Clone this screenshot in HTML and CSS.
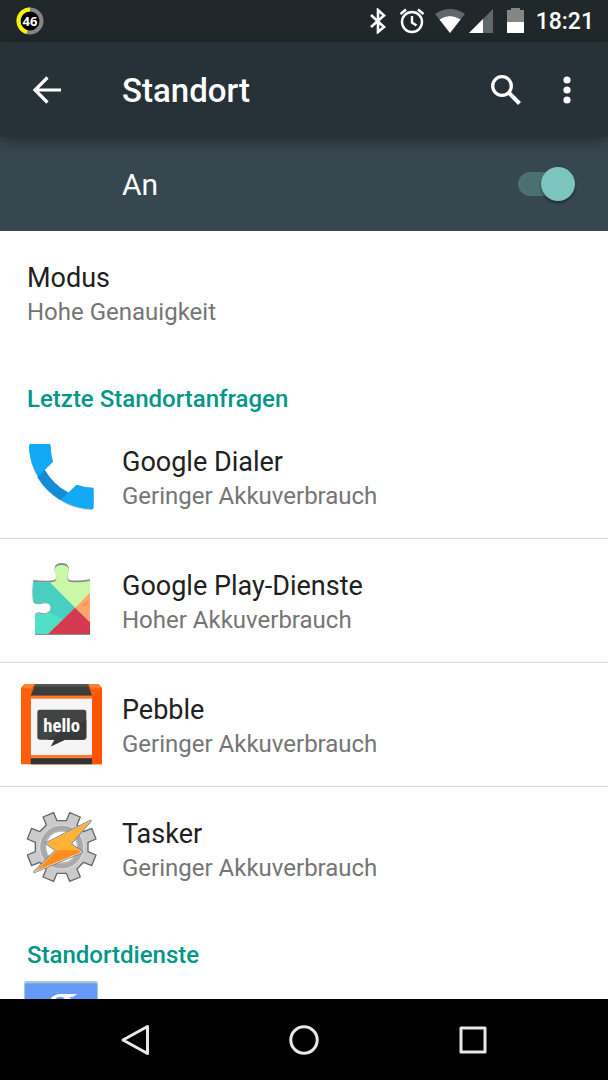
FILE: index.html
```html
<!DOCTYPE html>
<html lang="de">
<head>
    <meta charset="UTF-8">
    <meta name="viewport" content="width=device-width, initial-scale=1.0">
    <title>Standort</title>
    <link rel="stylesheet" href="styles.css">
</head>
<body>
    <div class="status-bar">
        <svg class="battery-ring" width="28" height="28" viewBox="0 0 28 28">
            <circle cx="14" cy="14" r="11.500" fill="#000" stroke="#858585" stroke-width="4"/>
            <path d="M14 2.500A11.500 11.500 0 0 0 11 25.100" fill="none" stroke="#f6f600" stroke-width="4"/>
            <text x="14" y="18.500" text-anchor="middle">46</text>
        </svg>
        <div class="status-icons">
            <!-- bluetooth -->
            <svg width="18" height="26" viewBox="0 0 18 26">
                <path d="M2 7L15 19L9 24V2L15 7.500L2 19" fill="none" stroke="#fff" stroke-width="2.600"/>
            </svg>
            <!-- alarm -->
            <svg class="alarm" width="26" height="26" viewBox="0 0 26 26">
                <circle cx="13" cy="14" r="10" fill="none" stroke="#fff" stroke-width="2.400"/>
                <path d="M13 8V14.500L17.500 17.500M1.500 6L7 1.500M24.500 6L19 1.500" fill="none" stroke="#fff" stroke-width="2.400"/>
            </svg>
            <!-- wifi -->
            <svg class="wifi" width="30" height="26" viewBox="0 0 30 26">
                <path d="M0 6Q15 -4 30 6L15 25Z" fill="#5f686c"/>
                <path d="M4.500 11.500Q15 4.500 25.500 11.500L15 25Z" fill="#fff"/>
            </svg>
            <!-- signal -->
            <svg class="signal" width="24" height="26" viewBox="0 0 24 26">
                <path d="M24 1V25H0Z" fill="#5f686c"/>
                <path d="M14 11V25H0Z" fill="#fff"/>
            </svg>
            <!-- battery -->
            <svg class="battery" width="17" height="26" viewBox="0 0 17 26">
                <path d="M0 2H4V0H13V2H17V14H0Z" fill="#858585"/>
                <path d="M0 14H17V25H0Z" fill="#fff"/>
            </svg>
            <span class="clock">18:21</span>
        </div>
    </div>

    <header class="app-bar">
        <button class="icon-btn" aria-label="Zurück">
            <svg width="28" height="28" viewBox="0 0 28 28">
                <path d="M28 14H3M14.500 1.500L2 14L14.500 26.500" fill="none" stroke="#fff" stroke-width="3.200"/>
            </svg>
        </button>
        <h1>Standort</h1>
        <button class="icon-btn" aria-label="Suchen">
            <svg width="30" height="30" viewBox="0 0 30 30">
                <circle cx="11" cy="11" r="9.300" fill="none" stroke="#fff" stroke-width="3.300"/>
                <path d="M17.500 17.500L28.500 28.500" stroke="#fff" stroke-width="4"/>
            </svg>
        </button>
        <button class="icon-btn" aria-label="Weitere Optionen">
            <svg width="8" height="28" viewBox="0 0 8 28">
                <g fill="#fff">
                    <circle cx="4" cy="4" r="3.600"/>
                    <circle cx="4" cy="14" r="3.600"/>
                    <circle cx="4" cy="24" r="3.600"/>
                </g>
            </svg>
        </button>
    </header>

    <div class="switch-bar">
        <label for="locationSwitch">An</label>
        <input type="checkbox" class="switch" id="locationSwitch" checked>
    </div>

    <main class="settings">
        <a class="row mode" href="#">
            <span class="text">
                <span class="title">Modus</span>
                <span class="summary">Hohe Genauigkeit</span>
            </span>
        </a>

        <h2>Letzte Standortanfragen</h2>
        <ul class="list">
            <li>
                <a class="row" href="#">
                    <svg class="app-icon" viewBox="33 18 243 243">
                        <path d="M62 42H117Q122 42 122 48Q122 75 129 95L104 120Q130 165 175 188L200 164Q222 172 247 173Q251 173 251 178V233Q251 240 245 240Q170 238 115 183Q58 123 57 48Q57 42 62 42Z" fill="#b9c0c4"/>
                        <path d="M62 42H117Q122 42 122 48Q122 75 129 95L104 120Q130 165 175 188L200 164Q222 172 247 173Q251 173 251 178V230Q251 237 245 237Q170 235 115 180Q58 120 57 48Q57 42 62 42Z" fill="#12a9f6"/>
                        <path d="M104 120L82 142Q107 184 151 210L175 188Q130 165 104 120Z" fill="#148bd3"/>
                    </svg>
                    <span class="text">
                        <span class="title">Google Dialer</span>
                        <span class="summary">Geringer Akkuverbrauch</span>
                    </span>
                </a>
            </li>
            <li>
                <a class="row" href="#">
                    <svg class="app-icon" viewBox="33 30 243 243">
                        <defs>
                            <clipPath id="piece">
                                <path d="M70 95Q110 101 133 95Q141 92 138 78C130 62 132 45 155 45C178 45 180 62 173 78Q170 92 178 95Q205 99 240 93V252H75V200Q76 190 88 190C102 196 123 192 123 174C123 157 104 155 92 160Q77 164 71 154Q67 125 70 95Z"/>
                            </clipPath>
                        </defs>
                        <path d="M70 90Q110 95 133 90Q141 87 138 73C130 56 132 39 155 39C178 39 180 56 173 73Q170 87 178 90Q205 94 240 88V255H75V197Q76 187 88 187C102 193 120 189 122 174C123 159 104 157 92 162Q75 165 69 155Q65 125 70 90Z" fill="#8b8f8c"/>
                        <g clip-path="url(#piece)">
                            <path d="M60 30H250V252H60Z" fill="#cbf8a8"/>
                            <path d="M60 40L120 98L195 173L114 252H60Z" fill="#4fdfc6"/>
                            <path d="M60 80L104 82L195 173L160 207L60 160Z" fill="#49cfc2"/>
                            <path d="M195 173L241 127V218Z" fill="#ffa66e"/>
                            <path d="M210 169L236 149L231 168Z" fill="#ff934e"/>
                            <path d="M114 252L195 173L241 218V252Z" fill="#d4394f"/>
                        </g>
                    </svg>
                    <span class="text">
                        <span class="title">Google Play-Dienste</span>
                        <span class="summary">Hoher Akkuverbrauch</span>
                    </span>
                </a>
            </li>
            <li>
                <a class="row" href="#">
                    <svg class="app-icon" viewBox="33 27 243 243">
                        <path d="M33 38L44 27H265L276 38V268H33Z" fill="#fe5f0a"/>
                        <path d="M33 38L44 27H76L62 41Z" fill="#ff8134"/>
                        <path d="M276 38L265 27H234L246 41Z" fill="#ff8134"/>
                        <path d="M276 38V268H246V66Z" fill="#ff5200"/>
                        <path d="M76 27H234L246 62H62Z" fill="#3c3c3c"/>
                        <path d="M76 27H234L237 35H73Z" fill="#555"/>
                        <path d="M62 62H246V268H62Z" fill="#ff7a2c"/>
                        <path d="M63 71H246V240H63Z" fill="#f5f5f5"/>
                        <path d="M62 250H246V268H62Z" fill="#333"/>
                        <path d="M89 104H222Q229 104 229 111V187Q229 194 222 194H165L123 214L134 194H89Q82 194 82 187V111Q82 104 89 104Z" fill="#414344"/>
                        <path d="M229 135V187Q229 194 222 194H165L123 214L134 194H110Z" fill="#37393a"/>
                        <text class="hello" x="155" y="170" text-anchor="middle">hello</text>
                    </svg>
                    <span class="text">
                        <span class="title">Pebble</span>
                        <span class="summary">Geringer Akkuverbrauch</span>
                    </span>
                </a>
            </li>
            <li>
                <a class="row" href="#">
                    <svg class="app-icon" viewBox="33 24 243 243">
                        <g transform="translate(155 141)">
                            <path d="M14 -79L24 -103L56 -90L46 -66L66 -46L90 -56L103 -24L79 -14V14L103 24L90 56L66 46L46 66L56 90L24 103L14 79H-14L-24 103L-56 90L-46 66L-66 46L-90 56L-103 24L-79 14V-14L-103 -24L-90 -56L-66 -46L-46 -66L-56 -90L-24 -103L-14 -79Z" fill="#cbcbcb" stroke="#666" stroke-width="4" stroke-linejoin="round"/>
                            <circle r="57" fill="#fff" stroke="#e4e4e4" stroke-width="20"/>
                            <circle r="57" fill="none" stroke="#a9a9a9" stroke-width="15"/>
                            <circle r="48" fill="none" stroke="#888" stroke-width="2"/>
                        </g>
                        <path d="M241 63L109 130L139 151L73 216L216 156L181 132Z" fill="#fff" stroke="#777" stroke-width="7" stroke-linejoin="round"/>
                        <path d="M241 63L109 130L139 151L73 216L216 156L181 132Z" fill="#ff8c1c" stroke="#fff" stroke-width="2"/>
                        <path d="M241 63L109 130L139 151H210L181 132Z" fill="#ffb233"/>
                    </svg>
                    <span class="text">
                        <span class="title">Tasker</span>
                        <span class="summary">Geringer Akkuverbrauch</span>
                    </span>
                </a>
            </li>
        </ul>

        <h2>Standortdienste</h2>
        <ul class="list">
            <li>
                <a class="row single" href="#" aria-label="Google">
                    <svg class="app-icon" viewBox="63 153 243 243">
                        <rect x="72" y="153" width="222" height="222" rx="8" fill="#a2cbd2"/>
                        <rect x="75" y="160" width="216" height="216" rx="6" fill="#659bf6"/>
                        <path d="M150 212C153 199 168 192 185 192H232L218 201H207C217 207 219 216 217 228H150Z" fill="#fff"/>
                        <path d="M165 212C167 199 190 194 197 212Z" fill="#659bf6"/>
                    </svg>
                </a>
            </li>
        </ul>
    </main>

    <nav class="nav-bar">
        <button aria-label="Zurück">
            <svg width="32" height="32" viewBox="0 0 32 32">
                <path d="M28.500 2.500V29.500L4 16Z" fill="none" stroke="#e8e8e8" stroke-width="3" stroke-linejoin="round"/>
            </svg>
        </button>
        <button aria-label="Startbildschirm">
            <svg width="32" height="32" viewBox="0 0 32 32">
                <circle cx="16" cy="16" r="13.200" fill="none" stroke="#e8e8e8" stroke-width="3"/>
            </svg>
        </button>
        <button aria-label="Letzte Apps">
            <svg width="32" height="32" viewBox="0 0 32 32">
                <rect x="4" y="4" width="24" height="24" fill="none" stroke="#e8e8e8" stroke-width="3" stroke-linejoin="round"/>
            </svg>
        </button>
    </nav>
</body>
</html>
```
FILE: styles.css
```css
* {
    box-sizing: border-box;
}
body {
    display: flex;
    flex-direction: column;
    height: 100vh;
    margin: 0;
    background-color: #ffffff;
    font-family: Roboto, sans-serif;
    color: #212121;
}
h1, h2, ul {
    margin: 0;
    padding: 0;
}
svg {
    display: block;
    flex: none;
}
button {
    display: flex;
    align-items: center;
    justify-content: center;
    padding: 0;
    border: none;
    background: none;
    cursor: pointer;
}

/* status bar */
.status-bar {
    display: flex;
    flex: none;
    align-items: center;
    justify-content: space-between;
    height: 42px;
    padding: 0 14px 0 16px;
    background-color: #21282b;
    color: #ffffff;
}
.battery-ring text {
    font-family: "Open Sans", sans-serif;
    font-size: 13px;
    font-weight: 700;
    fill: #ffffff;
}
.status-icons {
    display: flex;
    align-items: center;
}
.status-icons svg {
    margin-right: 12px;
}
.status-icons .alarm {
    margin-right: 10px;
}
.status-icons .wifi {
    margin-right: 4px;
}
.status-icons .signal {
    margin-right: 14px;
}
.clock {
    padding-top: 2px;
    font-size: 23px;
    font-weight: 500;
    line-height: 40px;
}

/* toolbar */
.app-bar {
    display: flex;
    flex: none;
    align-items: center;
    position: relative;
    height: 95px;
    padding: 0 14px 0 20px;
    background-color: #263238;
    box-shadow: 0 4px 12px rgba(0, 0, 0, 0.4);
    color: #ffffff;
}
.app-bar h1 {
    flex: 1;
    padding: 2px 0 0 48px;
    font-size: 33px;
    font-weight: 500;
    line-height: 40px;
}
.icon-btn {
    width: 54px;
    height: 54px;
}
.icon-btn + .icon-btn {
    margin-left: 7px;
}

/* on / off */
.switch-bar {
    display: flex;
    flex: none;
    align-items: center;
    justify-content: space-between;
    height: 94px;
    padding: 0 33px 0 122px;
    background-color: #37474f;
    color: #ffffff;
}
.switch-bar label {
    padding-top: 2px;
    font-size: 30px;
    line-height: 36px;
}
.switch {
    display: flex;
    align-items: center;
    appearance: none;
    width: 57px;
    height: 34px;
    margin: 0;
    background: linear-gradient(#4a706f, #4a706f) center / 100% 24px no-repeat;
    border-radius: 17px;
    cursor: pointer;
}
.switch::before {
    content: "";
    width: 34px;
    height: 34px;
    border-radius: 50%;
    background-color: #b9b9b9;
    box-shadow: 0 2px 3px rgba(0, 0, 0, 0.4);
}
.switch:checked {
    justify-content: flex-end;
    background: radial-gradient(circle at 12px 17px, #4a706f 12px, transparent 12px), linear-gradient(#4a706f, #4a706f) 12px center / 32px 24px no-repeat;
}
.switch:checked::before {
    background-color: #7cc5bf;
}

/* settings list */
.settings {
    flex: 1;
    min-height: 0;
    overflow-y: auto;
    scrollbar-width: none;
}
.settings h2 {
    padding: 29px 27px 0;
    color: #009688;
    font-size: 24px;
    font-weight: 500;
    line-height: 32px;
}
.list {
    list-style: none;
}
.list li + li {
    border-top: 1px solid #dcdcdc;
}
.row {
    display: flex;
    align-items: center;
    gap: 20px;
    min-height: 123px;
    padding: 0 21px;
    color: inherit;
    text-decoration: none;
}
.row.mode {
    padding: 0 27px;
}
.row.single {
    min-height: 101px;
}
.app-icon {
    width: 81px;
    height: 81px;
}
.app-icon .hello {
    font-family: "Liberation Sans Narrow", "Roboto Condensed", "Open Sans Condensed", Roboto, sans-serif;
    font-size: 56px;
    font-weight: 700;
    fill: #ffffff;
}
.text {
    display: flex;
    flex-direction: column;
    padding-top: 2px;
}
.title {
    font-size: 27px;
    line-height: 36px;
}
.summary {
    color: #757575;
    font-size: 24px;
    line-height: 32px;
}

/* navigation */
.nav-bar {
    display: flex;
    flex: none;
    height: 81px;
    padding: 0 50px;
    background-color: #000000;
}
.nav-bar button {
    flex: 1;
}
```
